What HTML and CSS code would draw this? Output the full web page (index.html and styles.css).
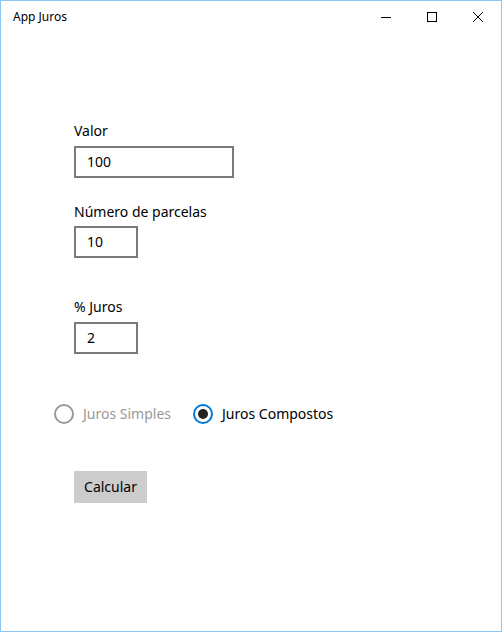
FILE: index.html
```html
<!DOCTYPE html>
<html lang="pt">
<head>
<meta charset="utf-8">
<title>App Juros</title>
<link rel="stylesheet" href="styles.css">
</head>
<body>
<div class="window">
  <div class="titlebar">
    <span class="title">App Juros</span>
    <div class="controls">
      <div class="ctl"><svg width="10" height="10" viewBox="0 0 10 10"><path d="M0 5.5H10" stroke="#000" stroke-width="1"/></svg></div>
      <div class="ctl"><svg width="10" height="10" viewBox="0 0 10 10"><rect x="0.5" y="0.5" width="9" height="9" fill="none" stroke="#000" stroke-width="1"/></svg></div>
      <div class="ctl"><svg width="10" height="10" viewBox="0 0 10 10"><path d="M0 0L10 10M10 0L0 10" stroke="#000" stroke-width="1"/></svg></div>
    </div>
  </div>
  <div class="content">
    <div class="field f1">
      <label class="lbl">Valor</label>
      <div class="box wide">100</div>
    </div>
    <div class="field f2">
      <label class="lbl">Número de parcelas</label>
      <div class="box">10</div>
    </div>
    <div class="field f3">
      <label class="lbl">% Juros</label>
      <div class="box">2</div>
    </div>
    <div class="radios">
      <div class="radio disabled"><span class="circle"></span><span>Juros Simples</span></div>
      <div class="radio checked"><span class="circle"><span class="dot"></span></span><span>Juros Compostos</span></div>
    </div>
    <div class="btn">Calcular</div>
  </div>
</div>
</body>
</html>
```
FILE: styles.css
```css
* { box-sizing: border-box; }
html, body { margin: 0; padding: 0; background: #fff; }
body { font-family: "Noto Sans", "Open Sans", sans-serif; color: #000; }
.window {
  width: 502px; height: 632px;
  border: 1px solid #8ec5f2;
  background: #fff;
  display: flex; flex-direction: column;
}
.titlebar {
  height: 31px;
  display: flex; align-items: center; justify-content: space-between;
}
.title { font-size: 12px; padding-left: 12px; padding-top: 0px; }
.controls { display: flex; height: 31px; }
.ctl { width: 46px; height: 31px; display: flex; align-items: center; justify-content: center; }
.controls svg { display: block; }
.content { padding-left: 73px; display: flex; flex-direction: column; align-items: flex-start; font-size: 14px; }
.field { display: flex; flex-direction: column; gap: 5px; }
.f1 { margin-top: 89px; }
.f2 { margin-top: 24px; gap: 4px; }
.f3 { margin-top: 39px; }
.lbl { line-height: 20px; height: 20px; }
.box {
  width: 64px; height: 32px;
  border: 2px solid #7a7a7a;
  padding-left: 11px;
  line-height: 28px;
}
.box.wide { width: 160px; }
.radios { display: flex; align-items: center; margin-top: 50px; margin-left: -20px; height: 20px; }
.radio { display: flex; align-items: center; gap: 9px; line-height: 20px; }
.radio + .radio { margin-left: 22px; }
.circle {
  width: 20px; height: 20px; border-radius: 50%;
  border: 2px solid #999;
  display: flex; align-items: center; justify-content: center;
}
.disabled { color: #999; }
.checked .circle { border-color: #0078d7; }
.dot { width: 10px; height: 10px; border-radius: 50%; background: #222; }
.btn {
  margin-top: 47px;
  width: 73px; height: 32px;
  background: #ccc;
  display: flex; align-items: center; justify-content: center;
  line-height: 20px;
}
```
